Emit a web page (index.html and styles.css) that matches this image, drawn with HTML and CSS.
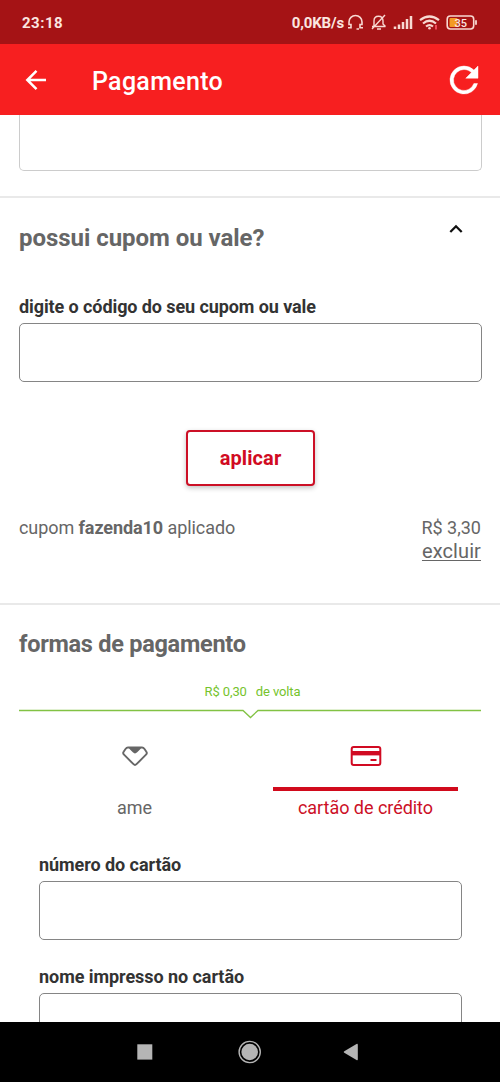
FILE: index.html
```html
<!DOCTYPE html>
<html lang="pt-BR">
<head>
<meta charset="utf-8">
<title>Pagamento</title>
<link rel="stylesheet" href="styles.css">
</head>
<body>
<div class="screen">
  <header class="status">
    <span class="clock">23:18</span>
    <div class="indicators">
      <span class="speed">0,0KB/s</span>
      <svg class="tray" width="134" height="20" viewBox="0 0 134 20" fill="none" stroke="#f8d9d2" stroke-width="1.600">
        <path d="M3 15.800H6V12.500H4V10A6.300 6.300 0 0 1 17 10V12.500H15V15.800H18M11.500 17H14"/>
        <path d="M27 14.500H40.500M29 14V9C29 6 31 4.200 33.500 4.200S38 6 38 9V12L40.500 14.500M32 17H36M27 17L40 3" stroke-width="1.400"/>
        <path d="M50 14.500V17M54 12.500V17M58 10V17M62 7V17M66 4V17" stroke-width="2.500"/>
        <path d="M75 8.200Q84.500 .8 94 8.200M78 11.500Q84.500 6 91 11.500M81 14.500Q84.500 11.800 88 14.500" stroke-width="2.200"/>
        <circle cx="84.500" cy="16.300" r="1.300" fill="#f8d9d2" stroke="none"/>
        <path d="M91 13V17.500" stroke="#f04a58" stroke-width="2"/>
        <rect x="102.200" y="4" width="26.500" height="13" rx="3.200"/>
        <path d="M131 8.200V12.800" stroke-width="1.800"/>
        <rect x="104.500" y="6" width="8" height="9" rx="1" fill="#f39a24" stroke="none"/>
        <text class="battery" x="109.500" y="14.500">35</text>
      </svg>
    </div>
  </header>
  <div class="appbar">
    <svg class="back" width="22" height="22" viewBox="0 0 22 22" fill="none" stroke="#fff" stroke-width="2.500"><path d="M21 11H2.500M11.500 1.800L2.300 11L11.500 20.200"/></svg>
    <h1 class="title">Pagamento</h1>
    <svg class="reload" width="42" height="42" viewBox="0 0 24 24" fill="#fff" stroke="#fff" stroke-width=".25"><path d="M17.650 6.350A7.958 7.958 0 0 0 12 4a8 8 0 1 0 7.730 10h-2.080A6 6 0 1 1 12 6c1.660 0 3.140.69 4.220 1.780L13 11h7V4z"/></svg>
  </div>
  <main class="content">
    <div class="cut-box"></div>
    <section class="coupon">
      <div class="head">
        <h2 class="heading heading-coupon">possui cupom ou vale?</h2>
        <svg class="chevron" width="14" height="10" viewBox="0 0 14 10" fill="none" stroke="#111" stroke-width="2.300"><path d="M1.300 8L7 2.300L12.700 8"/></svg>
      </div>
      <label class="label label-coupon" for="code">digite o código do seu cupom ou vale</label>
      <input class="field" id="code" type="text">
      <button class="apply" type="button">aplicar</button>
      <div class="applied">
        <span class="applied-text">cupom <b>fazenda10</b> aplicado</span>
        <div class="applied-value"><span class="price">R$ 3,30</span><a class="remove">excluir</a></div>
      </div>
    </section>
    <section class="payment">
      <h2 class="heading heading-payment">formas de pagamento</h2>
      <div class="cashback"><span>R$ 0,30</span><span>de volta</span></div>
      <svg class="notch" width="462" height="12" viewBox="0 0 462 12" fill="none" stroke="#82c244" stroke-width="1.300"><path d="M0 2.500H224L231.500 9.500L239 2.500H462"/></svg>
      <div class="tabs">
        <div class="tab">
          <svg class="tab-icon" width="32" height="24" viewBox="0 0 32 24" fill="none" stroke="#666" stroke-width="1.900" stroke-linejoin="round"><path d="M9 3.500H23Q24.500 3.500 25.500 5L27.200 7.500Q28.500 9.200 27 10.700L17.500 20.200Q16 21.700 14.500 20.200L5 10.700Q3.500 9.200 4.800 7.500L6.500 5Q7.500 3.500 9 3.500Z"/><path d="M11 4L14.500 7.700Q16 9.200 17.500 7.700L21 4Z" fill="#666"/></svg>
          <span class="tab-line"></span>
          <span class="tab-name">ame</span>
        </div>
        <div class="tab tab-active">
          <svg class="tab-icon" width="32" height="24" viewBox="0 0 32 24" fill="none" stroke="#d10a22" stroke-width="2"><rect x="1.700" y="3" width="28.600" height="18" rx="2"/><path d="M2 9.200H30" stroke-width="4.400"/><path d="M20.500 16H26.500"/></svg>
          <span class="tab-line"></span>
          <span class="tab-name tab-name-card">cartão de crédito</span>
        </div>
      </div>
      <div class="form">
        <label class="label label-number" for="number">número do cartão</label>
        <input class="field" id="number" type="text">
        <label class="label label-name" for="name">nome impresso no cartão</label>
        <input class="field" id="name" type="text">
      </div>
    </section>
  </main>
  <nav class="navbar">
    <svg width="500" height="60" viewBox="0 0 500 60"><rect x="137.300" y="22.300" width="15" height="15.300" fill="#b5b5b5"/><circle cx="249.700" cy="30" r="10.600" fill="none" stroke="#b5b5b5" stroke-width="1.400"/><circle cx="249.700" cy="30" r="8.300" fill="#b5b5b5"/><path d="M344.300 29.200L356.500 22Q357.800 21.300 357.800 22.800V37.200Q357.800 38.700 356.500 38L344.300 30.800Q343 30 344.300 29.200Z" fill="#b5b5b5"/></svg>
  </nav>
</div>
</body>
</html>
```

FILE: styles.css
```css
* { box-sizing: border-box; }
body { margin: 0; font-family: Roboto, "Liberation Sans", sans-serif; background: #fff; }
h1, h2 { margin: 0; }
.screen { width: 500px; height: 1082px; display: flex; flex-direction: column; overflow: hidden; }

.status { height: 44px; flex: none; background: #a51315; color: #fbe6e0; display: flex; justify-content: space-between; padding: 11px 21px 0 22px; font-size: 15px; font-weight: 700; line-height: 24px; }
.clock { letter-spacing: .5px; }
.indicators { display: flex; gap: 1px; }
.speed { letter-spacing: -.15px; }
.tray { margin-top: 1px; }
.battery { font-size: 11px; font-weight: 500; fill: #fbe6e0; stroke: none; }

.appbar { height: 71px; flex: none; background: #f71f20; display: flex; align-items: center; padding: 0 15px 0 25px; }
.title { margin-left: 45px; margin-top: 4px; color: #fff; font-size: 25px; font-weight: 500; line-height: 32px; letter-spacing: .3px; flex: 1; }
.reload { margin-top: 1px; }

.content { height: 907px; flex: none; overflow: hidden; }
.cut-box { height: 56px; margin: 0 18px 0 19px; border: 1px solid #ccc; border-top: 0; border-radius: 0 0 5px 5px; }
.coupon { margin-top: 25px; height: 407px; border-top: 2px solid #e9e9e9; padding: 23px 18px 0 19px; }
.head { display: flex; justify-content: space-between; height: 32px; }
.heading { color: #666; font-size: 24px; font-weight: 700; line-height: 32px; white-space: nowrap; }
.heading-coupon { letter-spacing: -.04px; margin-top: 1px; }
.heading-payment { font-size: 23.5px; letter-spacing: -.27px; }
.chevron { margin: 3px 19px 0 0; }
.label { display: block; color: #333; font-size: 18px; font-weight: 700; line-height: 24px; white-space: nowrap; letter-spacing: -.06px; }
.label-coupon { margin-top: 42px; letter-spacing: -.09px; }
.field { display: block; width: 100%; height: 59px; margin: 4px 0 0; border: 1px solid #858585; border-radius: 5px; background: #fff; outline: 0; }
.apply { display: block; width: 129px; height: 56px; margin: 48px auto 0; padding: 0; border: 2px solid #cc1026; border-radius: 4px; background: #fff; color: #d10a22; font: 700 20px/48px Roboto, sans-serif; letter-spacing: .1px; box-shadow: 0 2px 5px rgba(0, 0, 0, .24); }
.applied { margin-top: 30px; display: flex; justify-content: space-between; color: #666; font-size: 18px; line-height: 24px; }
.applied-text { letter-spacing: -.08px; }
.applied-value { display: flex; flex-direction: column; align-items: flex-end; padding-right: 1px; }
.remove { font-size: 20px; line-height: 23px; letter-spacing: .1px; text-decoration: underline; text-underline-offset: 2px; text-decoration-thickness: 1px; }

.payment { border-top: 2px solid #e9e9e9; padding: 23px 18px 0 19px; }
.cashback { display: flex; justify-content: center; gap: 9px; margin: 24px 0 0 4px; height: 16px; color: #75c32c; font-size: 13px; line-height: 16px; letter-spacing: -.12px; }
.notch { display: block; margin-top: 8px; }
.tabs { display: flex; margin-top: 24px; }
.tab { width: 231px; display: flex; flex-direction: column; align-items: center; color: #666; }
.tab-icon { display: block; }
.tab-line { width: 185px; height: 4px; margin-top: 19px; }
.tab-name { font-size: 18px; line-height: 24px; margin-top: 5px; }
.tab-name-card { letter-spacing: -.04px; }
.tab-active { color: #cc1026; }
.tab-active .tab-line { background: #d10a1c; }
.form { padding: 33px 20px 0; }
.label-name { margin-top: 26px; }
.form .field { margin-top: 4px; }
.form .label-number + .field { margin-top: 4px; height: 59px; }
.form .label-name { margin-top: 25px; }

.navbar { height: 60px; background: #000; }
.navbar svg { display: block; }
```
